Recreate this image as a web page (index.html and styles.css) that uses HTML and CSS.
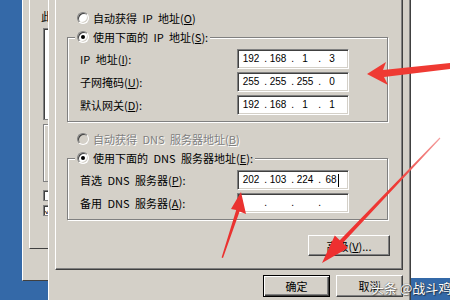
FILE: index.html
```html
<!DOCTYPE html>
<html lang="zh-CN">
<head>
<meta charset="utf-8">
<title>Internet 协议 (TCP/IP) 属性</title>
<link rel="stylesheet" href="styles.css">
</head>
<body>
<div class="desktop-left">
  <div class="back-win">
    <div class="back-page">
      <div class="back-label">此连接使用下列项目:</div>
      <div class="back-list"></div>
      <div class="back-desc"></div>
      <div class="back-check"></div>
      <div class="back-check checked">✓</div>
    </div>
  </div>
</div>

<div class="dialog">
  <div class="tab-page">
    <div class="opt"><span class="radio"></span><span>自动获得 IP 地址(<u>O</u>)</span></div>
    <fieldset class="group">
      <legend class="legend"><span class="radio on"></span><span>使用下面的 IP 地址(<u>S</u>):</span></legend>
      <div class="form">
        <span class="lbl">IP 地址(<u>I</u>):</span>
        <div class="ip"><span class="seg">192</span><span class="dot">.</span><span class="seg">168</span><span class="dot">.</span><span class="seg">1</span><span class="dot">.</span><span class="seg">3</span></div>
        <span class="lbl">子网掩码(<u>U</u>):</span>
        <div class="ip"><span class="seg">255</span><span class="dot">.</span><span class="seg">255</span><span class="dot">.</span><span class="seg">255</span><span class="dot">.</span><span class="seg">0</span></div>
        <span class="lbl">默认网关(<u>D</u>):</span>
        <div class="ip"><span class="seg">192</span><span class="dot">.</span><span class="seg">168</span><span class="dot">.</span><span class="seg">1</span><span class="dot">.</span><span class="seg">1</span></div>
      </div>
    </fieldset>

    <div class="opt disabled"><span class="radio off"></span><span>自动获得 DNS 服务器地址(<u>B</u>)</span></div>
    <fieldset class="group">
      <legend class="legend"><span class="radio on"></span><span>使用下面的 DNS 服务器地址(<u>E</u>):</span></legend>
      <div class="form">
        <span class="lbl">首选 DNS 服务器(<u>P</u>):</span>
        <div class="ip"><span class="seg">202</span><span class="dot">.</span><span class="seg">103</span><span class="dot">.</span><span class="seg">224</span><span class="dot">.</span><span class="seg">68<i class="caret"></i></span></div>
        <span class="lbl">备用 DNS 服务器(<u>A</u>):</span>
        <div class="ip"><span class="seg"></span><span class="dot">.</span><span class="seg"></span><span class="dot">.</span><span class="seg"></span><span class="dot">.</span><span class="seg"></span></div>
      </div>
    </fieldset>

    <div class="adv-row"><button class="btn adv">高级(<u>V</u>)...</button></div>
  </div>
  <div class="btn-row">
    <button class="btn default">确定</button>
    <button class="btn">取消</button>
  </div>
</div>

<div class="desktop-right">
  <div class="blank"></div>
  <div class="taskbar"></div>
</div>

<div class="watermark">头条 @战斗鸡</div>

<svg class="marks" width="450" height="300" viewBox="0 0 450 300">
  <defs>
    <linearGradient id="fade3" gradientUnits="userSpaceOnUse" x1="440" y1="138" x2="345" y2="238">
      <stop offset="0" stop-color="#f4a0a0"/>
      <stop offset="0.45" stop-color="#ee3b36"/>
      <stop offset="1" stop-color="#ee3030"/>
    </linearGradient>
  </defs>
  <polygon fill="#ef3a33" points="367,74 386,62 383,70 450,63 450,69 384,77 388,85"/>
  <polygon fill="#ea3230" points="241,192 246,214 239.6,211.5 223,258 221.6,257.4 236.2,210 231,209"/>
  <polygon fill="url(#fade3)" points="322,263 334.8,235.5 339.8,240.3 439.6,137.6 440.4,138.4 342.8,243.1 348,248"/>
</svg>
</body>
</html>
```

FILE: styles.css
```css
* { box-sizing: border-box; }

html, body { margin: 0; padding: 0; }

body {
  width: 450px;
  height: 300px;
  overflow: hidden;
  position: relative;
  display: flex;
  background: #fff;
  font-family: "Noto Sans CJK SC", "Liberation Sans", sans-serif;
  font-size: 11px;
  line-height: 16px;
  color: #000;
}

u { text-decoration: underline; text-underline-offset: 1px; }

/* ---------- desktop + background window ---------- */
.desktop-left {
  width: 48px;
  flex: none;
  background: #3469a8;
}

.back-win {
  margin-left: 22px;
  width: 26px;
  height: 281px;
  background: #d4d0c8;
  border-left: 1px solid #fff;
  border-bottom: 1px solid #404040;
  padding-left: 6px;
  overflow: hidden;
}

.back-page {
  width: 200px;
  height: 249px;
  border-left: 1px solid #fff;
  border-bottom: 1px solid #404040;
  padding: 8px 0 0 11px;
}

.back-label { white-space: nowrap; }

.back-list {
  margin: 4px 0 0 2px;
  width: 120px;
  height: 92px;
  background: #fff;
  border: 1px solid #808080;
  box-shadow: inset 1px 1px 0 #404040;
}

.back-desc {
  margin: 4px 0 0 2px;
  width: 120px;
  height: 58px;
  border: 1px solid #808080;
  box-shadow: inset 1px 1px 0 #fff;
}

.back-check {
  margin: 8px 0 0 2px;
  width: 11px;
  height: 11px;
  background: #fff;
  border: 1px solid #808080;
  box-shadow: inset 1px 1px 0 #404040;
  font-size: 9px;
  line-height: 9px;
  text-indent: 1px;
}

.back-check.checked { margin-top: 4px; }

/* ---------- main dialog ---------- */
.dialog {
  width: 363px;
  height: 300px;
  flex: none;
  background: #d4d0c8;
  border-left: 1px solid #fff;
  border-right: 1px solid #404040;
  box-shadow: inset -1px 0 0 #808080;
  padding: 0 7px 0 6px;
}

.tab-page {
  width: 348px;
  height: 270px;
  border-left: 1px solid #fff;
  border-right: 1px solid #404040;
  border-bottom: 1px solid #404040;
  box-shadow: inset -1px -1px 0 #808080;
  padding-top: 10px;
}

.opt {
  display: flex;
  align-items: center;
  gap: 4px;
  height: 16px;
  margin-left: 21px;
  white-space: nowrap;
  word-spacing: 3px;
}

.opt.disabled {
  margin-top: 9px;
  color: #808080;
  text-shadow: 1px 1px 0 #fff;
}

.radio {
  flex: none;
  width: 12px;
  height: 12px;
  border-radius: 50%;
  background: #fff;
  border: 1px solid;
  border-color: #808080 #fff #fff #808080;
  box-shadow: inset 1px 1px 0 #404040, inset -1px -1px 0 #d4d0c8;
  display: grid;
  place-items: center;
}

.radio.on::after {
  content: "";
  width: 4px;
  height: 4px;
  border-radius: 50%;
  background: #000;
}

.radio.off { background: #d4d0c8; }

.group {
  margin: 3px 0 0 11px;
  width: 321px;
  min-inline-size: 0;
  padding: 4px 0 6px 12px;
  border: 1px solid #808080;
  box-shadow: inset 1px 1px 0 #fff, 1px 1px 0 #fff;
}

.legend {
  margin-left: -5px;
  padding: 0 2px;
  height: 16px;
  display: flex;
  align-items: center;
  gap: 4px;
  background: #d4d0c8;
  white-space: nowrap;
  word-spacing: 3px;
}

.form {
  display: grid;
  grid-template-columns: 157px 112px;
  grid-auto-rows: 20px;
  row-gap: 3px;
  align-items: center;
}

.lbl {
  white-space: nowrap;
  word-spacing: 3px;
}

.ip {
  height: 20px;
  display: flex;
  align-items: center;
  background: #fff;
  border: 1px solid;
  border-color: #808080 #fff #fff #808080;
  box-shadow: inset 1px 1px 0 #404040, inset -1px -1px 0 #d4d0c8;
  padding-left: 3px;
  font-family: "Liberation Sans", Arial, sans-serif;
  font-size: 10px;
}

.seg {
  width: 20px;
  text-align: center;
  white-space: nowrap;
}

.dot {
  width: 7px;
  text-align: right;
  padding-right: 1px;
}

.caret {
  display: inline-block;
  width: 1px;
  height: 13px;
  background: #000;
  vertical-align: middle;
  margin-left: 1px;
}

.adv-row {
  display: flex;
  justify-content: flex-end;
  margin-top: 15px;
  padding-right: 12px;
}

.btn {
  font: inherit;
  color: #000;
  height: 21px;
  padding: 0;
  background: #d4d0c8;
  border: 1px solid;
  border-color: #fff #404040 #404040 #fff;
  box-shadow: inset -1px -1px 0 #808080;
  word-spacing: 3px;
}

.btn.adv { width: 82px; }

.btn-row {
  display: flex;
  justify-content: flex-end;
  gap: 6px;
  margin-top: 5px;
}

.btn-row .btn {
  width: 67px;
  height: 22px;
}

.btn.default {
  border: 1px solid #000;
  box-shadow: inset 1px 1px 0 #fff, inset -1px -1px 0 #404040, inset -2px -2px 0 #808080;
}

/* ---------- right side ---------- */
.desktop-right {
  flex: 1;
  display: flex;
  flex-direction: column;
}

.blank {
  height: 278px;
  background: #fff;
}

.taskbar {
  flex: 1;
  background: #3469a8;
}

/* ---------- overlays ---------- */
.watermark {
  position: absolute;
  left: 371px;
  top: 279px;
  font-size: 13px;
  line-height: 18px;
  color: #fff;
  white-space: nowrap;
  text-shadow: 0 0 1px #333, 1px 1px 1px rgba(0, 0, 0, 0.5);
}

.marks {
  position: absolute;
  left: 0;
  top: 0;
  pointer-events: none;
}
```
